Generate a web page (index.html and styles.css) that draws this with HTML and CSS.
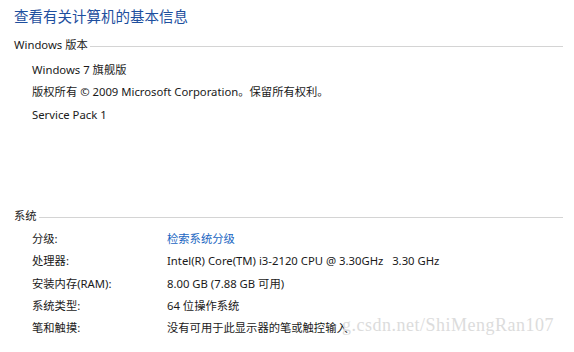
FILE: index.html
```html
<!DOCTYPE html>
<html lang="zh-CN">
<head>
    <meta charset="UTF-8">
    <title>查看有关计算机的基本信息</title>
    <link rel="stylesheet" href="styles.css">
</head>
<body>
    <div class="page">
        <h1 class="title">查看有关计算机的基本信息</h1>

        <div class="section-head">
            <span>Windows 版本</span>
            <div class="rule"></div>
        </div>
        <div class="version">
            <div class="line">Windows 7 旗舰版</div>
            <div class="line">版权所有 © 2009 Microsoft Corporation。保留所有权利。</div>
            <div class="line">Service Pack 1</div>
        </div>

        <div class="section-head system-head">
            <span>系统</span>
            <div class="rule"></div>
        </div>
        <div class="props">
            <div class="label">分级:</div>
            <div class="value"><a class="link" href="#">检索系统分级</a></div>
            <div class="label">处理器:</div>
            <div class="value">Intel(R) Core(TM) i3-2120 CPU @ 3.30GHz &nbsp; 3.30 GHz</div>
            <div class="label">安装内存(RAM):</div>
            <div class="value">8.00 GB (7.88 GB 可用)</div>
            <div class="label">系统类型:</div>
            <div class="value">64 位操作系统</div>
            <div class="label">笔和触摸:</div>
            <div class="value">没有可用于此显示器的笔或触控输入</div>
        </div>

        <div class="watermark">g.csdn.net/ShiMengRan107</div>
    </div>
</body>
</html>
```

FILE: styles.css
```css
body {
    margin: 0;
    background: #fff;
    font-family: "Noto Sans", "Noto Sans CJK SC", sans-serif;
    font-size: 11.3px;
    color: #1a1a1a;
}
.page {
    position: relative;
    width: 574px;
    height: 352px;
    padding: 6px 11px 0 14px;
    box-sizing: border-box;
    overflow: hidden;
}
.title {
    margin: 0;
    font-size: 14.5px;
    font-weight: normal;
    line-height: 20px;
    color: #1e4f9e;
}
.section-head {
    display: flex;
    align-items: center;
    height: 20px;
    line-height: 20px;
    margin-top: 9px;
}
.section-head .rule {
    flex: 1;
    height: 1px;
    background: #d4d4d4;
    margin: 3px 0 0 2px;
}
.system-head {
    margin-top: 80px;
}
.version,
.props {
    padding-left: 18px;
    margin-top: 4px;
}
.line {
    height: 22.4px;
    line-height: 22.4px;
    white-space: nowrap;
}
.props {
    display: grid;
    grid-template-columns: 135px 1fr;
    grid-auto-rows: 22.2px;
    line-height: 22.2px;
    white-space: nowrap;
    margin-top: 2px;
}
.link {
    color: #1a66c2;
    text-decoration: none;
}
.watermark {
    position: absolute;
    left: 342px;
    top: 315px;
    font-family: "Liberation Serif", serif;
    font-size: 18px;
    letter-spacing: 0.5px;
    color: #dcdcdc;
    white-space: nowrap;
}
```
